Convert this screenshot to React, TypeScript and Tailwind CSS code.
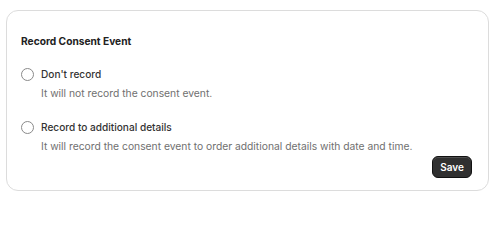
import React from "react";

const options = [
  {
    label: "Don't record",
    description: "It will not record the consent event.",
  },
  {
    label: "Record to additional details",
    description:
      "It will record the consent event to order additional details with date and time.",
  },
];

const App = () => {
  return (
    <div className="w-[500px] h-[202px] bg-white px-[6px] pt-[10px] font-['Inter',sans-serif]">
      <div className="h-[181px] w-[483px] rounded-[12px] border border-[#dcdcdc] bg-white pl-[14px] pr-[16px] pt-[23px]">
        <h2 className="text-[10.2px] font-bold leading-[14px] text-[#222]">
          Record Consent Event
        </h2>
        <div className="mt-[19px] flex flex-col gap-[20px]">
          {options.map((opt) => (
            <label key={opt.label} className="flex gap-[7px]">
              <span className="mt-[1px] h-[13px] w-[13px] shrink-0 rounded-full border border-[#8a8a8a] bg-white" />
              <span className="flex flex-col">
                <span className="text-[10.1px] font-medium leading-[14px] text-[#333]">
                  {opt.label}
                </span>
                <span className="mt-[5px] text-[10.3px] leading-[14px] text-[#707070]">
                  {opt.description}
                </span>
              </span>
            </label>
          ))}
        </div>
        <div className="mt-[3px] flex justify-end">
          <button className="h-[22px] w-[40px] rounded-[6px] border border-[#111] bg-[#303030] text-[10px] font-semibold text-white shadow-[inset_0_1px_0_rgba(255,255,255,0.15)]">
            Save
          </button>
        </div>
      </div>
    </div>
  );
};

export default App;
